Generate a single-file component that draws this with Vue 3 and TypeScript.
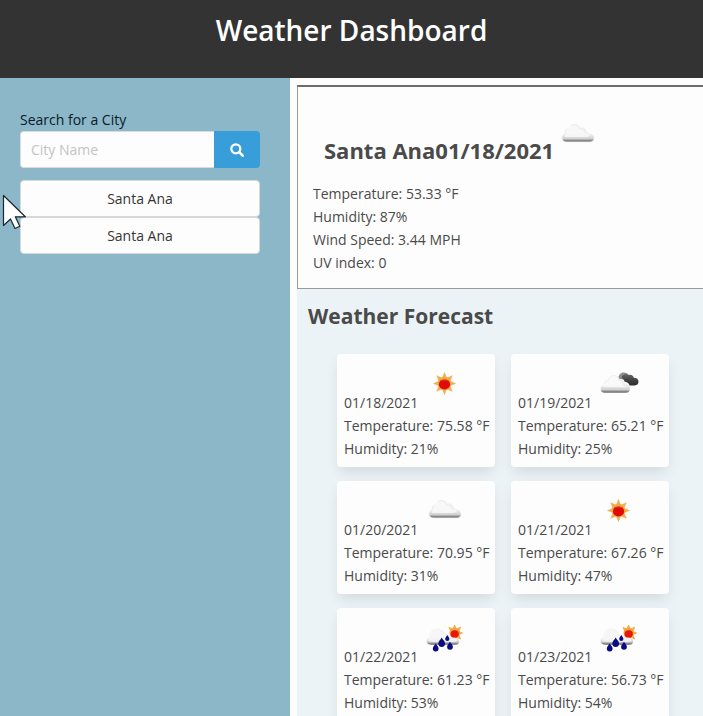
<script setup lang="ts">
import { ref } from 'vue'

type Icon = 'sun' | 'cloud' | 'broken' | 'rain'

interface Day {
  date: string
  icon: Icon
  temperature: string
  humidity: number
}

const city = ref('')
const history = ref<string[]>(['Santa Ana', 'Santa Ana'])

const forecast: Day[] = [
  { date: '01/18/2021', icon: 'sun', temperature: '75.58', humidity: 21 },
  { date: '01/19/2021', icon: 'broken', temperature: '65.21', humidity: 25 },
  { date: '01/20/2021', icon: 'cloud', temperature: '70.95', humidity: 31 },
  { date: '01/21/2021', icon: 'sun', temperature: '67.26', humidity: 47 },
  { date: '01/22/2021', icon: 'rain', temperature: '61.23', humidity: 53 },
  { date: '01/23/2021', icon: 'rain', temperature: '56.73', humidity: 54 },
]

function search() {
  const name = city.value.trim()
  if (name) {
    history.value.push(name)
    city.value = ''
  }
}
</script>

<template>
  <div class="page">
    <svg class="defs" width="0" height="0" aria-hidden="true">
      <defs>
        <linearGradient id="cloudFill" x1="0" y1="0" x2="0" y2="1">
          <stop offset="0" stop-color="#f2f2f2" />
          <stop offset="0.6" stop-color="#ececec" />
          <stop offset="0.82" stop-color="#cfcfcf" />
          <stop offset="0.93" stop-color="#7c7c7c" />
          <stop offset="1" stop-color="#a0a0a0" />
        </linearGradient>
        <linearGradient id="darkFill" x1="0" y1="0" x2="0" y2="1">
          <stop offset="0" stop-color="#6a6a6a" />
          <stop offset="0.5" stop-color="#444" />
          <stop offset="1" stop-color="#2c2c2c" />
        </linearGradient>
        <symbol id="icon-cloud" viewBox="0 0 47 47">
          <path d="M12 30c-2.400-.3-4-2-4-4.200 0-2 1.400-3.700 3.300-4.100-.8-3 .9-5 3.500-4.900 1-3 3.400-4.500 6.200-4.300 2.500.2 4.300 1.500 5.200 3.700 3-1.100 6.100.8 6.200 4.200 1 .1 1.700.7 2 1.600 3.200-.2 5.400 1.400 5.600 3.800.1 2.600-1.500 4.100-4 4.200z" fill="url(#cloudFill)" stroke="#e4e4e4" stroke-width=".5" />
          <path d="M12 19c1.500-3.500 5-5.400 9-5.200 2.600.2 3.800 2 4.300 4 2.500-1 4.600.2 5 3.100 2 .3 4 1 5.500 2.100l-2 2H11z" fill="#fbfbfb" opacity=".75" />
        </symbol>
        <symbol id="icon-broken" viewBox="0 0 47 47">
          <path d="M23 18c.3-3.800 2.600-6.500 5.600-6.500 2.800 0 4.600 1.300 5.600 3.500l-4 4z" fill="#8d8d8d" />
          <path d="M27 15c1.800-2.300 4.500-2.800 6.600-1.100 2.500-.7 4.700.5 5.200 2.900 2.900 0 4.700 1.600 4.700 4 0 2.200-1.500 3.600-3.800 3.600h-5c-1-2.500-3-3.600-5.200-3.700-.4-1.900-1.200-3-2.800-3.600z" fill="url(#darkFill)" />
          <path d="M10 32c-2.400 0-4.300-1.700-4.300-4.100 0-2.200 1.200-3.700 3.200-4-.3-3 1.300-5 3.900-5 1-3.200 3.300-5.200 6-5.200 2.800 0 4.900 1.800 5.700 4.400 2.900-.4 5.200 1.700 5.200 4.700 3.200.1 5.300 1.800 5.300 4.600 0 2.700-1.700 4.600-4.500 4.600z" fill="url(#cloudFill)" />
          <path d="M8 26c.5-3.500 3-5.700 5.500-6 1-3.300 2.800-5 5.500-5 2.600 0 4 2 4.600 4.800 2.800-.2 4.300 1.500 4.400 4.500l4 2z" fill="#fbfbfb" opacity=".8" />
        </symbol>
        <symbol id="icon-sun" viewBox="0 0 47 47">
          <path d="M23.500 11.500l2.200 5.500h-4.400zM23.500 33.500l-2.200-5.500h4.400zM12.500 22.500l5.500-2.200v4.400zM34.500 22.500l-5.500 2.200v-4.400zM15.700 14.700l5.500 2.300-3.200 3.200zM31.300 30.300l-5.500-2.300 3.200-3.200zM31.300 14.700l-2.300 5.500-3.200-3.200zM15.700 30.300l2.300-5.500 3.200 3.200z" fill="#efae52" stroke="#efae52" stroke-width=".5" />
          <circle cx="23.500" cy="22.500" r="6.600" fill="#f0a83c" />
          <ellipse cx="23.500" cy="23.400" rx="5.600" ry="5" fill="#e30a05" />
          <path d="M19.500 19.600h8.200" stroke="#c8501e" stroke-width="1.200" stroke-dasharray="1 1" />
        </symbol>
        <symbol id="icon-rain" viewBox="0 0 47 47">
          <path d="M33.600 10l1.600 4h-3.200zM41.600 18l-4 1.600v-3.200zM28 12.400l3.900 1.700-2.200 2.200zM39.600 12.200l-1.600 4-2.300-2.300zM39.600 23.900l-4-1.800 2.200-2.200z" fill="#efab4c" stroke="#efab4c" stroke-width=".9" />
          <circle cx="33.700" cy="18" r="5.200" fill="#f2a33b" />
          <ellipse cx="33.700" cy="18.900" rx="4.100" ry="3.700" fill="#e81510" />
          <path d="M10 30c-2.600-.2-4.400-1.800-4.400-4 0-2 1.300-3.500 3.300-3.900-.4-5 2.600-8.500 7-8.500 4 0 7 2.200 8 5.700 3-.6 5.200 1 6 3.500 4.500-.4 8.300.5 8.300 3.500 0 2.400-1.600 3.700-4.200 3.700z" fill="url(#cloudFill)" />
          <path d="M7 26c0-8 4-11.500 8.500-11.500s7 2.400 7.700 6c3-.7 5 .9 5.700 3.300 3-.3 6 0 7.800 1.500L34 27H12z" fill="#fafafa" opacity=".7" />
          <g fill="#0b0b86">
            <path d="M14.700 28.500c1 1.900 2.900 3.300 2.900 5a2.900 2.900 0 0 1-5.800 0c0-1.700 1.900-3.100 2.900-5z" />
            <path d="M20.700 22.500c1.200 2.300 3.400 4 3.400 6a3.400 3.400 0 0 1-6.800 0c0-2 2.200-3.700 3.400-6z" />
            <path d="M26.300 20c.7 1.600 2.100 2.600 2.100 4a2.100 2.100 0 0 1-4.200 0c0-1.400 1.400-2.400 2.100-4z" />
            <path d="M29 26.800c1 1.900 2.900 3.300 2.900 5a2.900 2.900 0 0 1-5.800 0c0-1.700 1.900-3.100 2.900-5z" />
          </g>
        </symbol>
      </defs>
    </svg>

    <header class="banner">
      <h1>Weather Dashboard</h1>
    </header>

    <div class="layout">
      <aside class="sidebar">
        <form class="search" @submit.prevent="search">
          <label for="city">Search for a City</label>
          <div class="field">
            <input id="city" v-model="city" type="text" placeholder="City Name" />
            <button type="submit" class="go" aria-label="Search">
              <svg width="14" height="14" viewBox="0 0 14 14" aria-hidden="true">
                <circle cx="5.800" cy="5.800" r="4.500" fill="none" stroke="#fff" stroke-width="2.200" />
                <path d="M9.200 9.200l3.500 3.500" stroke="#fff" stroke-width="2.600" stroke-linecap="round" />
              </svg>
            </button>
          </div>
        </form>
        <div class="history">
          <button v-for="(name, i) in history" :key="i" type="button">{{ name }}</button>
        </div>
      </aside>

      <main class="content">
        <section class="current">
          <div class="place">
            <h2>Santa Ana01/18/2021</h2>
            <svg class="icon" aria-hidden="true"><use href="#icon-cloud" /></svg>
          </div>
          <p>Temperature: 53.33 °F</p>
          <p>Humidity: 87%</p>
          <p>Wind Speed: 3.44 MPH</p>
          <p>UV index: 0</p>
        </section>

        <section class="forecast">
          <h2>Weather Forecast</h2>
          <div class="cards">
            <article v-for="day in forecast" :key="day.date" class="card">
              <div class="date">
                <span>{{ day.date }}</span>
                <svg class="icon" aria-hidden="true"><use :href="'#icon-' + day.icon" /></svg>
              </div>
              <p>Temperature: {{ day.temperature }} °F</p>
              <p>Humidity: {{ day.humidity }}%</p>
            </article>
          </div>
        </section>
      </main>
    </div>

    <svg class="pointer" width="26" height="38" viewBox="0 0 26 38" aria-hidden="true">
      <path d="M1.500 1.500v30l7-6.500 4.500 9.500 4.800-2.200-4.500-9.500h10z" fill="#fff" stroke="#1c2630" stroke-width="1.200" stroke-linejoin="round" />
    </svg>
  </div>
</template>

<style>
html {
  overflow: hidden;
}

body {
  margin: 0;
  background: #fdfdfd;
}
</style>

<style scoped>
.page {
  position: relative;
  display: flex;
  flex-direction: column;
  height: 100vh;
  overflow: hidden;
  color: #4a4a4a;
  font-family: 'Open Sans', 'Noto Sans', sans-serif;
  font-size: 14px;
  line-height: 23px;
}

.defs {
  position: absolute;
}

h1,
h2,
p {
  margin: 0;
}

h2 {
  font-size: 22px;
  font-weight: 700;
  line-height: 28px;
}

.banner {
  flex: none;
  box-sizing: border-box;
  padding: 10px 0 28px;
  background: #333;
  color: #fff;
  text-align: center;
}

.banner h1 {
  font-size: 28px;
  font-weight: 600;
  line-height: 40px;
}

.layout {
  flex: 1;
  display: flex;
  min-height: 0;
}

.sidebar {
  flex: 0 0 290px;
  min-width: 0;
  box-sizing: border-box;
  padding: 30px 30px 0 20px;
  background: #8bb7c9;
}

.search label {
  display: block;
  color: #0a1a24;
}

.field {
  display: flex;
}

.field input {
  flex: 1;
  min-width: 0;
  box-sizing: border-box;
  height: 37px;
  margin: 0;
  padding: 0 10px;
  border: 1px solid #dbdbdb;
  border-right: 0;
  border-radius: 4px 0 0 4px;
  background: #fdfdfd;
  color: #363636;
  font: inherit;
  outline: 0;
}

.field input::placeholder {
  color: #c3c3c3;
  opacity: 1;
}

.go {
  display: flex;
  align-items: center;
  justify-content: center;
  width: 46px;
  height: 37px;
  padding: 0;
  border: 0;
  border-radius: 0 4px 4px 0;
  background: #379ed9;
}

.history {
  display: flex;
  flex-direction: column;
  margin-top: 12px;
}

.history button {
  height: 37px;
  padding: 0;
  border: 1px solid #d5d9dc;
  border-radius: 4px;
  background: #fdfdfd;
  color: #363636;
  font: inherit;
}

.content {
  flex: 1;
  display: flex;
  flex-direction: column;
  min-width: 0;
  padding: 7px 0 0 7px;
}

.current {
  flex: none;
  padding: 25px 15px 14px;
  border: 1px solid #9a9a9a;
  border-top: 2px solid #6c6c6c;
  border-right: 0;
  background: #fdfdfd;
}

.place {
  display: flex;
  align-items: baseline;
  padding: 0 0 18px 11px;
}

.icon {
  flex: none;
  width: 47px;
  height: 47px;
}

.forecast {
  flex: 1;
  min-height: 0;
  padding: 13px 34px 0 11px;
  background: #ebf3f7;
}

.forecast h2 {
  font-size: 21px;
}

.cards {
  display: grid;
  grid-template-columns: 1fr 1fr;
  gap: 14px 16px;
  padding: 24px 0 0 29px;
}

.card {
  padding: 7px 0 7px 7px;
  border-radius: 4px;
  background: #fdfdfd;
  box-shadow: 0 7px 14px -2px rgba(10, 10, 10, 0.1);
  white-space: nowrap;
}

.date {
  display: flex;
  align-items: baseline;
  gap: 3px;
}

.pointer {
  position: absolute;
  top: 194px;
  left: 2px;
}
</style>
